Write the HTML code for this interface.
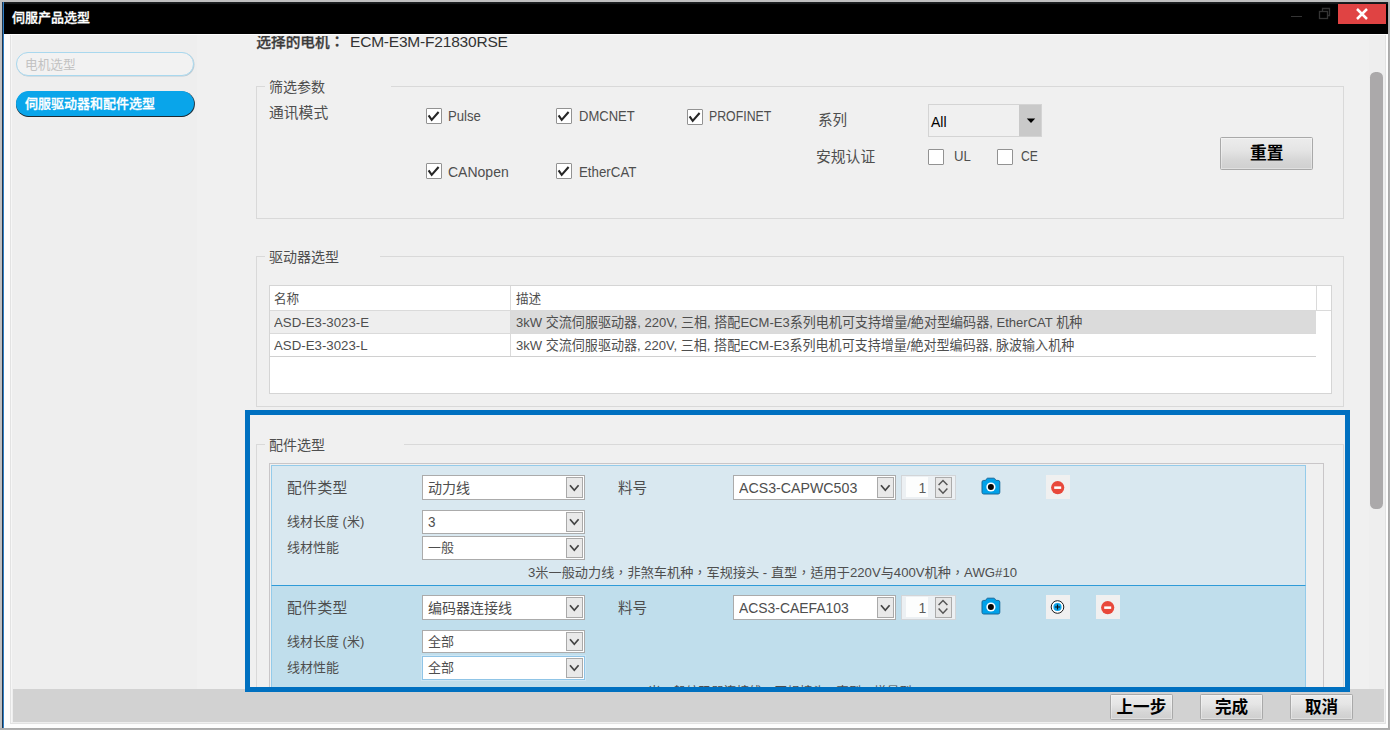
<!DOCTYPE html>
<html lang="zh-CN">
<head>
<meta charset="utf-8">
<title>伺服产品选型</title>
<style>
html,body{margin:0;padding:0;}
body{width:1390px;height:730px;position:relative;overflow:hidden;background:#c0c0c0;
 font-family:"Liberation Sans","Noto Sans CJK SC",sans-serif;color:#4e4e4e;}
.a{position:absolute;box-sizing:border-box;}
.t{position:absolute;white-space:nowrap;line-height:1;margin:0;padding:0;}
.b{font-weight:bold;}
.sx{transform-origin:0 0;}
.tc{font-family:"Liberation Sans","Noto Sans CJK TC",sans-serif;}
/* window */
#win{left:2px;top:2px;width:1385.8px;height:725.8px;background:#fdfdfd;}
#obR{left:1387.8px;top:2px;width:2.2px;height:728px;background:linear-gradient(90deg,#a6a6a6,#b4b4b4);}
#obB{left:0;top:727.8px;width:1390px;height:2.2px;background:linear-gradient(#a8a8a8,#b2b2b2);}
#lb1{left:2px;top:2px;width:1.2px;height:725.8px;background:#1d3550;}
#lb2{left:3px;top:2px;width:1.2px;height:725.8px;background:#2f7ec4;}
#tb{left:2px;top:2px;width:1385.8px;height:32px;background:linear-gradient(#1c1f21 0,#1a1d1f 1.3px,#000 2.6px);}
#side{left:11px;top:35px;width:186px;height:687.5px;background:#eeeeee;border-left:1.5px solid #f6f6f6;}
#main{left:197px;top:35px;width:1188px;height:687.5px;background:#f0f0f0;}
#frameL{left:10.3px;top:35px;width:1px;height:688.5px;background:#e2e2e2;}
#frameB{left:10.3px;top:722.6px;width:1375.5px;height:1px;background:#e2e2e2;}
#frameR{left:1385px;top:35px;width:1px;height:688.5px;background:#e2e2e2;}
#bar{left:12.5px;top:689px;width:1371.5px;height:32.5px;background:#d2d2d2;}
/* groups */
.grp{border:1px solid #d9d9d9;}
.gl{background:#f0f0f0;}
.cb{width:15.5px;height:16px;background:#fff;border:1px solid #929292;border-radius:1px;}
.cb svg{position:absolute;left:0;top:0;}
.btn{border:1px solid #a9a9a9;border-radius:1.5px;background:linear-gradient(#ececec,#e5e5e5 38%,#d6d6d6 72%,#cfcfcf);box-shadow:inset 0 0 0 1px rgba(255,255,255,.35);}
.combo{background:#fff;border:1px solid #ababab;height:25px;}
.dd{border:1.5px solid #a9a9a9;background:#e9e9e9;width:17px;height:21px;}
</style>
</head>
<body>
<div class="a" id="obR"></div>
<div class="a" id="obB"></div>
<div class="a" id="win"></div>
<div class="a" id="tb"></div>
<div class="a" id="lb1"></div>
<div class="a" id="lb2"></div>
<div class="a" id="side"></div>
<div class="a" id="main"></div>
<div class="a" id="frameL"></div>
<div class="a" id="frameB"></div>
<div class="a" id="frameR"></div>

<!-- title bar -->
<div class="t" id="ttl" style="font-weight:500;-webkit-text-stroke:0.3px #fff;left:12px;top:10.7px;font-size:13px;color:#fff;">伺服产品选型</div>
<div class="a" style="left:1290.5px;top:15.5px;width:11px;height:1.6px;background:#343434;"></div>
<svg class="a" style="left:1318px;top:7px;" width="14" height="14" viewBox="0 0 14 14"><path d="M4.5 4.5V1.5H11.5V8.5H9" fill="none" stroke="#343434" stroke-width="1.3"/><rect x="1.5" y="4.5" width="8" height="7" fill="none" stroke="#343434" stroke-width="1.3"/></svg>
<div class="a" style="left:1338px;top:4px;width:48px;height:20px;background:#e04343;"></div>
<svg class="a" style="left:1356px;top:8px;" width="12" height="12" viewBox="0 0 12 12"><path d="M1 1L11 11M11 1L1 11" stroke="#fff" stroke-width="2.5" fill="none"/></svg>

<!-- sidebar -->
<div class="a" style="left:16px;top:52px;width:178px;height:24px;border-radius:12px;border:1.7px solid #a9d8ee;background:#f2f2f2;box-shadow:0.5px 0.5px 0 rgba(150,175,190,.55);"></div>
<div class="t" id="p1" style="left:25px;top:58.5px;font-size:12.7px;color:#c2c2c2;">电机选型</div>
<div class="a" style="left:16px;top:91px;width:177.5px;height:24.5px;border-radius:12.5px;background:#09a5ea;box-shadow:0 1px 0 #1c2a33, 1px 0.5px 0 #2b3f4b;"></div>
<div class="t" id="p2" style="font-weight:500;-webkit-text-stroke:0.3px #fff;left:25px;top:97px;font-size:13px;color:#fff;">伺服驱动器和配件选型</div>

<!-- header line -->
<div class="a" style="left:250px;top:35.5px;width:300px;height:20px;overflow:hidden;">
<div class="t b tc" lang="zh-TW" id="h1" style="font-weight:500;-webkit-text-stroke:0.3px #3a3a3a;left:6.3px;top:-1px;font-size:14.7px;color:#3a3a3a;">选择的电机：</div>
<div class="t sx" id="h2" style="left:100px;top:-1.5px;font-size:15.5px;letter-spacing:-0.2px;color:#333;">ECM-E3M-F21830RSE</div>
</div>

<!-- group 1: filter -->
<div class="a grp" style="left:256px;top:86px;width:1088px;height:133px;"></div>
<div class="a gl" style="left:265px;top:84px;width:126px;height:5px;"></div>
<div class="t" id="g1" style="left:269px;top:79.5px;font-size:14px;">筛选参数</div>
<div class="t" id="l1" style="left:269px;top:106px;font-size:14.8px;">通讯模式</div>

<div class="a cb" style="left:426px;top:108px;"><svg width="14" height="14" viewBox="0 0 14 14"><path d="M1.6 6.4L4.7 10.9L11.6 3" fill="none" stroke="#262626" stroke-width="2.1"/></svg></div>
<div class="t sx" id="c1" style="left:448px;top:109px;font-size:14px;transform:scaleX(0.94);">Pulse</div>
<div class="a cb" style="left:556px;top:108px;"><svg width="14" height="14" viewBox="0 0 14 14"><path d="M1.6 6.4L4.7 10.9L11.6 3" fill="none" stroke="#262626" stroke-width="2.1"/></svg></div>
<div class="t sx" id="c2" style="left:579px;top:109px;font-size:14px;transform:scaleX(0.93);">DMCNET</div>
<div class="a cb" style="left:687px;top:109px;"><svg width="14" height="14" viewBox="0 0 14 14"><path d="M1.6 6.4L4.7 10.9L11.6 3" fill="none" stroke="#262626" stroke-width="2.1"/></svg></div>
<div class="t sx" id="c3" style="left:709px;top:109px;font-size:14px;transform:scaleX(0.88);">PROFINET</div>
<div class="a cb" style="left:426px;top:163px;"><svg width="14" height="14" viewBox="0 0 14 14"><path d="M1.6 6.4L4.7 10.9L11.6 3" fill="none" stroke="#262626" stroke-width="2.1"/></svg></div>
<div class="t" id="c4" style="left:448px;top:165px;font-size:14px;">CANopen</div>
<div class="a cb" style="left:556px;top:163px;"><svg width="14" height="14" viewBox="0 0 14 14"><path d="M1.6 6.4L4.7 10.9L11.6 3" fill="none" stroke="#262626" stroke-width="2.1"/></svg></div>
<div class="t sx" id="c5" style="left:579px;top:165px;font-size:14px;transform:scaleX(0.95);">EtherCAT</div>

<div class="t" id="l2" style="left:818px;top:113px;font-size:14.6px;">系列</div>
<div class="t" id="l3" style="left:816px;top:149.5px;font-size:14.8px;">安规认证</div>
<div class="a" style="left:928px;top:104px;width:114px;height:33px;background:#f0f0f0;border:1px solid #d4d4d4;"></div>
<div class="a" style="left:1019px;top:105px;width:22px;height:31px;background:#c9c9c9;"></div>
<svg class="a" style="left:1026px;top:118px;" width="10" height="6" viewBox="0 0 10 6"><path d="M0.8 0.6H9.2L5 4.9Z" fill="#000"/></svg>
<div class="t" id="s1" style="left:931px;top:114.5px;font-size:14px;color:#000;">All</div>
<div class="a cb" style="left:928px;top:149px;"></div>
<div class="t sx" id="c6" style="left:954px;top:149px;font-size:14px;transform:scaleX(0.94);">UL</div>
<div class="a cb" style="left:997px;top:149px;"></div>
<div class="t sx" id="c7" style="left:1021px;top:149px;font-size:14px;transform:scaleX(0.87);">CE</div>
<div class="a btn" style="left:1220px;top:137px;width:93px;height:33px;"></div>
<div class="t b" id="b1" style="left:1250px;top:145.5px;font-size:16.8px;color:#000;">重置</div>

<!-- group 2: driver -->
<div class="a grp" style="left:256px;top:256px;width:1088px;height:151px;"></div>
<div class="a gl" style="left:265px;top:254px;width:115px;height:5px;"></div>
<div class="t" id="g2" style="left:269px;top:249.5px;font-size:14px;">驱动器选型</div>
<div class="a" style="left:269px;top:285px;width:1063px;height:109px;background:#fff;border:1px solid #d5d5d5;"></div>
<div class="a" style="left:270px;top:311px;width:240px;height:22px;background:#eeeeee;"></div>
<div class="a" style="left:511px;top:311px;width:805px;height:22px;background:#dbdbdb;"></div>
<div class="a" style="left:270px;top:310px;width:1061px;height:1px;background:#dadada;"></div>
<div class="a" style="left:270px;top:333px;width:1046px;height:1px;background:#dadada;"></div>
<div class="a" style="left:270px;top:356px;width:1046px;height:1px;background:#d0d0d0;"></div>
<div class="a" style="left:510px;top:286px;width:1px;height:70px;background:#dadada;"></div>
<div class="a" style="left:1316px;top:286px;width:1px;height:25px;background:#dadada;"></div>
<div class="t" id="th1" style="left:274px;top:292.5px;font-size:12.6px;">名称</div>
<div class="t" id="th2" style="left:516px;top:292.5px;font-size:12.6px;">描述</div>
<div class="t sx" id="r1a" style="left:274px;top:315.5px;font-size:13.6px;transform:scaleX(0.975);">ASD-E3-3023-E</div>
<div class="t sx" id="r2a" style="left:274px;top:338.5px;font-size:13.6px;transform:scaleX(0.975);">ASD-E3-3023-L</div>
<div class="t sx" id="r1b" style="left:516px;top:315.5px;font-size:13.2px;transform:scaleX(0.990);">3kW 交流伺服驱动器, 220V, 三相, 搭配ECM-E3系列电机可支持增量/絶对型编码器, EtherCAT 机种</div>
<div class="t sx" id="r2b" style="left:516px;top:338.5px;font-size:13.2px;transform:scaleX(0.989);">3kW 交流伺服驱动器, 220V, 三相, 搭配ECM-E3系列电机可支持增量/絶对型编码器, 脉波输入机种</div>

<!-- group 3: accessories -->
<div class="a grp" style="left:256px;top:444px;width:1088px;height:260px;border-bottom:none;"></div>
<div class="a gl" style="left:265px;top:442px;width:139px;height:5px;"></div>
<div class="t" id="g3" style="left:269px;top:438px;font-size:14px;">配件选型</div>
<div class="a" style="left:269px;top:463px;width:1055px;height:240px;background:#f0f0f0;border:1px solid #c9c6c8;border-bottom:none;"></div>
<!-- item 1 -->
<div class="a" style="left:271px;top:465px;width:1035px;height:120px;background:#d9e8f0;border:1px solid #94cbea;border-bottom:none;"></div>
<!-- item 2 -->
<div class="a" style="left:271px;top:584.6px;width:1035px;height:120px;background:#c0deec;border:1px solid #94cbea;border-top:1.5px solid #2f9bd8;border-bottom:none;"></div>

<!-- item 1 content -->
<div class="t" id="i1l1" style="letter-spacing:0.4px;left:287px;top:480.5px;font-size:14.8px;">配件类型</div>
<div class="t sx" id="i1l2" style="left:287px;top:514.5px;font-size:13px;">线材长度 (米)</div>
<div class="t" id="i1l3" style="left:287px;top:541px;font-size:13px;">线材性能</div>
<div class="a combo" style="left:422px;top:475px;width:163px;height:25px;"><div class="a dd" style="right:1px;top:1px;height:21px;"><svg width="11" height="8" viewBox="0 0 11 8" style="position:absolute;left:2px;top:5.9px;"><path d="M1 1.2L5.3 6.3L9.6 1.2" fill="none" stroke="#444" stroke-width="1.7"/></svg></div></div>
<div class="t sx" id="i1c1" style="left:428px;top:480.5px;font-size:14px;">动力线</div>
<div class="a combo" style="left:422px;top:510px;width:163px;height:23.5px;"><div class="a dd" style="right:1px;top:1px;height:19.5px;"><svg width="11" height="8" viewBox="0 0 11 8" style="position:absolute;left:2px;top:5.4px;"><path d="M1 1.2L5.3 6.3L9.6 1.2" fill="none" stroke="#444" stroke-width="1.7"/></svg></div></div>
<div class="t sx" id="i1c2" style="left:428px;top:514.6px;font-size:14.5px;transform:scaleX(0.93);">3</div>
<div class="a combo" style="left:422px;top:536px;width:163px;height:23.5px;"><div class="a dd" style="right:1px;top:1px;height:19.5px;"><svg width="11" height="8" viewBox="0 0 11 8" style="position:absolute;left:2px;top:5.4px;"><path d="M1 1.2L5.3 6.3L9.6 1.2" fill="none" stroke="#444" stroke-width="1.7"/></svg></div></div>
<div class="t sx" id="i1c3" style="left:428px;top:541px;font-size:13px;">一般</div>
<div class="t" id="i1l4" style="left:618px;top:480.5px;font-size:14.6px;">料号</div>
<div class="a combo" style="left:733px;top:475px;width:163px;height:25px;"><div class="a dd" style="right:1px;top:1px;height:21px;"><svg width="11" height="8" viewBox="0 0 11 8" style="position:absolute;left:2px;top:5.9px;"><path d="M1 1.2L5.3 6.3L9.6 1.2" fill="none" stroke="#444" stroke-width="1.7"/></svg></div></div>
<div class="t sx" id="i1c4" style="left:739px;top:479.5px;font-size:15.3px;transform:scaleX(0.9275);">ACS3-CAPWC503</div>
<div class="a" style="left:901px;top:475px;width:55px;height:25px;background:#ecf0f3;border:1px solid #d2d5d8;"></div>
<div class="a" style="left:906px;top:477px;width:22px;height:20px;background:#fcfdfd;"></div>
<div class="a" style="left:935px;top:477px;width:17px;height:20.5px;background:#e6e6e6;border:1.5px solid #ababab;"><svg width="14" height="18" viewBox="0 0 14 18" style="position:absolute;left:0;top:0;"><path d="M2.6 7.1L7 2.5L11.4 7.1M2.6 10.6L7 15.2L11.4 10.6" fill="none" stroke="#555" stroke-width="1.5"/></svg></div>
<div class="t" id="i1n" style="color:#5c5c5c;left:918.5px;top:481px;font-size:14px;">1</div>
<svg class="a" style="left:981px;top:477.1px;" width="20" height="18" viewBox="0 0 20 18"><path d="M2.7 3.4H4.7L5.7 1.7Q6 1.2 6.6 1.2H12.9Q13.5 1.2 13.8 1.7L14.8 3.4H17.1Q18.8 3.4 18.8 5.1V15.3Q18.8 17 17.1 17H2.7Q1 17 1 15.3V5.1Q1 3.4 2.7 3.4Z" fill="#00a1e9" stroke="#16699c" stroke-width="1"/><circle cx="9.9" cy="10" r="4.6" fill="#fff"/><circle cx="9.9" cy="10" r="3" fill="#050505"/></svg>
<div class="a" style="left:1046px;top:475px;width:24px;height:24px;background:#f0f0f0;"><svg width="24" height="24" viewBox="0 0 24 24" style="position:absolute;left:0;top:0;"><circle cx="11.7" cy="12.6" r="6.6" fill="#e8483a"/><rect x="8.2" y="11.4" width="7" height="2.5" fill="#fff"/></svg></div>
<div class="t sx tc" lang="zh-TW" id="i1d" style="left:528px;top:566px;font-size:13px;transform:scaleX(1.013);">3米一般动力线，非煞车机种，军规接头 - 直型，适用于220V与400V机种，AWG#10</div>
<!-- item 2 content -->
<div class="t" id="i2l1" style="letter-spacing:0.4px;left:287px;top:600.5px;font-size:14.8px;">配件类型</div>
<div class="t sx" id="i2l2" style="left:287px;top:634.5px;font-size:13px;">线材长度 (米)</div>
<div class="t" id="i2l3" style="left:287px;top:661px;font-size:13px;">线材性能</div>
<div class="a combo" style="left:422px;top:595px;width:163px;height:25px;"><div class="a dd" style="right:1px;top:1px;height:21px;"><svg width="11" height="8" viewBox="0 0 11 8" style="position:absolute;left:2px;top:5.9px;"><path d="M1 1.2L5.3 6.3L9.6 1.2" fill="none" stroke="#444" stroke-width="1.7"/></svg></div></div>
<div class="t sx" id="i2c1" style="left:428px;top:600.5px;font-size:14px;">编码器连接线</div>
<div class="a combo" style="left:422px;top:629.6px;width:163px;height:23.5px;"><div class="a dd" style="right:1px;top:1px;height:19.5px;"><svg width="11" height="8" viewBox="0 0 11 8" style="position:absolute;left:2px;top:5.4px;"><path d="M1 1.2L5.3 6.3L9.6 1.2" fill="none" stroke="#444" stroke-width="1.7"/></svg></div></div>
<div class="t sx" id="i2c2" style="left:428px;top:635px;font-size:13px;">全部</div>
<div class="a combo" style="left:422px;top:656px;width:163px;height:23.5px;border-color:#8fc4e6;box-shadow:0 0 0 1px #cfe6f3;"><div class="a dd" style="right:1px;top:1px;height:19.5px;"><svg width="11" height="8" viewBox="0 0 11 8" style="position:absolute;left:2px;top:5.4px;"><path d="M1 1.2L5.3 6.3L9.6 1.2" fill="none" stroke="#444" stroke-width="1.7"/></svg></div></div>
<div class="t sx" id="i2c3" style="left:428px;top:661px;font-size:13px;">全部</div>
<div class="t" id="i2l4" style="left:618px;top:600.5px;font-size:14.6px;">料号</div>
<div class="a combo" style="left:733px;top:595px;width:163px;height:25px;"><div class="a dd" style="right:1px;top:1px;height:21px;"><svg width="11" height="8" viewBox="0 0 11 8" style="position:absolute;left:2px;top:5.9px;"><path d="M1 1.2L5.3 6.3L9.6 1.2" fill="none" stroke="#444" stroke-width="1.7"/></svg></div></div>
<div class="t sx" id="i2c4" style="left:739px;top:599.5px;font-size:15.3px;transform:scaleX(0.9094);">ACS3-CAEFA103</div>
<div class="a" style="left:901px;top:595px;width:55px;height:25px;background:#ecf0f3;border:1px solid #d2d5d8;"></div>
<div class="a" style="left:906px;top:597px;width:22px;height:20px;background:#fcfdfd;"></div>
<div class="a" style="left:935px;top:597px;width:17px;height:20.5px;background:#e6e6e6;border:1.5px solid #ababab;"><svg width="14" height="18" viewBox="0 0 14 18" style="position:absolute;left:0;top:0;"><path d="M2.6 7.1L7 2.5L11.4 7.1M2.6 10.6L7 15.2L11.4 10.6" fill="none" stroke="#555" stroke-width="1.5"/></svg></div>
<div class="t" id="i2n" style="color:#5c5c5c;left:918.5px;top:601px;font-size:14px;">1</div>
<svg class="a" style="left:981px;top:597.1px;" width="20" height="18" viewBox="0 0 20 18"><path d="M2.7 3.4H4.7L5.7 1.7Q6 1.2 6.6 1.2H12.9Q13.5 1.2 13.8 1.7L14.8 3.4H17.1Q18.8 3.4 18.8 5.1V15.3Q18.8 17 17.1 17H2.7Q1 17 1 15.3V5.1Q1 3.4 2.7 3.4Z" fill="#00a1e9" stroke="#16699c" stroke-width="1"/><circle cx="9.9" cy="10" r="4.6" fill="#fff"/><circle cx="9.9" cy="10" r="3" fill="#050505"/></svg>
<div class="a" style="left:1046px;top:595px;width:24px;height:24px;background:#f0f0f0;"><svg width="24" height="24" viewBox="0 0 24 24" style="position:absolute;left:0;top:0;"><circle cx="11.5" cy="12" r="6.3" fill="#fff" stroke="#1a1a1a" stroke-width="1"/><circle cx="11.5" cy="12" r="4.1" fill="#0aa3ea"/><path d="M8.9 12H14.1M11.5 9.4V14.6" stroke="#111" stroke-width="1.1" fill="none"/></svg></div>
<div class="a" style="left:1096px;top:595px;width:24px;height:24px;background:#f0f0f0;"><svg width="24" height="24" viewBox="0 0 24 24" style="position:absolute;left:0;top:0;"><circle cx="11.7" cy="12.6" r="6.6" fill="#e8483a"/><rect x="8.2" y="11.4" width="7" height="2.5" fill="#fff"/></svg></div>
<div class="t sx tc" lang="zh-TW" id="i2d" style="left:641px;top:685.3px;font-size:13px;transform:scaleX(0.972);">3米一般编码器连接线，军规接头 - 直型，增量型</div>

<!-- bottom bar, highlight, scrollbar -->
<div class="a" id="bar"></div>
<div class="a" style="left:245px;top:410.2px;width:1105px;height:281.4px;border:5px solid #0070c0;"></div>
<div class="a" style="left:1369px;top:35px;width:16px;height:654px;background:#eeeeee;"></div>
<div class="a" style="left:1370px;top:72px;width:13px;height:437px;border-radius:5.5px;background:#aba9aa;"></div>
<div class="a btn" style="left:1110px;top:694px;width:63px;height:26px;"></div>
<div class="t b" id="bb1" style="left:1116.5px;top:699.5px;font-size:16.6px;color:#000;">上一步</div>
<div class="a btn" style="left:1200px;top:694px;width:63px;height:26px;"></div>
<div class="t b" id="bb2" style="left:1215px;top:699.5px;font-size:16.6px;color:#000;">完成</div>
<div class="a btn" style="left:1290px;top:694px;width:63px;height:26px;"></div>
<div class="t b" id="bb3" style="left:1305px;top:699.5px;font-size:16.6px;color:#000;">取消</div>

</body>
</html>
